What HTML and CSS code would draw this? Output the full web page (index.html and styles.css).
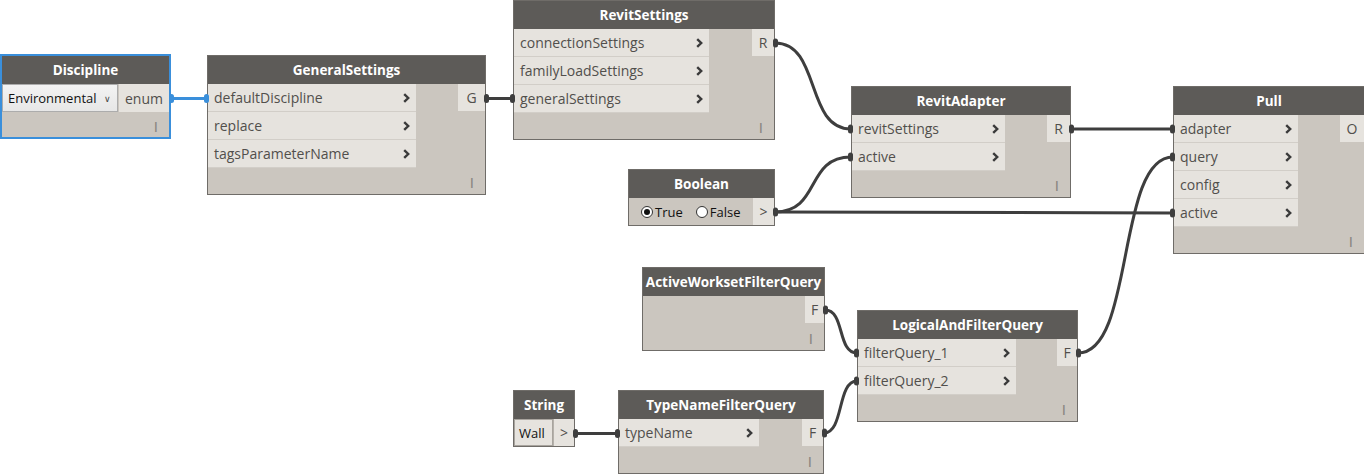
FILE: index.html
```html
<!DOCTYPE html>
<html>
<head>
<meta charset="utf-8">
<link rel="stylesheet" href="styles.css">
</head>
<body>
<div class="canvas">
  <svg class="wires" width="1364" height="474" viewBox="0 0 1364 474">
    <g fill="none" stroke="#3e3e3e" stroke-width="3">
      <path d="M486 98.5 L513 98.5"/>
      <path d="M775 43 C821 43 805 129 851 129"/>
      <path d="M775 212 C821 212 805 157 851 157"/>
      <path d="M775 212 L1173 213"/>
      <path d="M1071 129 L1173 129"/>
      <path d="M1078 353 C1135 353 1116 157 1173 157"/>
      <path d="M825 310 C845 310 837 353 857 353"/>
      <path d="M824 433 C844 433 837 381 857 381"/>
      <path d="M575 433.5 L618 433.5"/>
    </g>
    <path d="M171 98.5 L207 98.5" fill="none" stroke="#3a8fdb" stroke-width="3"/>
    <g fill="#3e3e3e">
      <rect x="484" y="94" width="5" height="9" rx="2.5"/>
      <rect x="510" y="94" width="5" height="9" rx="2.5"/>
      <rect x="773" y="38.5" width="5" height="9" rx="2.5"/>
      <rect x="848" y="124.5" width="5" height="9" rx="2.5"/>
      <rect x="773" y="207.5" width="5" height="9" rx="2.5"/>
      <rect x="848" y="152.5" width="5" height="9" rx="2.5"/>
      <rect x="1170" y="208.5" width="5" height="9" rx="2.5"/>
      <rect x="1069" y="124.5" width="5" height="9" rx="2.5"/>
      <rect x="1170" y="124.5" width="5" height="9" rx="2.5"/>
      <rect x="1170" y="152.5" width="5" height="9" rx="2.5"/>
      <rect x="1076" y="348.5" width="5" height="9" rx="2.5"/>
      <rect x="823" y="305.5" width="5" height="9" rx="2.5"/>
      <rect x="854" y="348.5" width="5" height="9" rx="2.5"/>
      <rect x="822" y="428.5" width="5" height="9" rx="2.5"/>
      <rect x="854" y="376.5" width="5" height="9" rx="2.5"/>
      <rect x="573" y="429" width="5" height="9" rx="2.5"/>
      <rect x="615" y="429" width="5" height="9" rx="2.5"/>
    </g>
    <g fill="#3a8fdb">
      <rect x="169" y="94" width="5" height="9" rx="2.5"/>
      <rect x="204" y="94" width="5" height="9" rx="2.5"/>
    </g>
  </svg>

  <!-- Discipline -->
  <div class="node n-discipline selected">
    <div class="hdr">Discipline</div>
    <div class="main">
      <div class="dropdown"><span>Environmental</span><span class="dd-arrow">&#x2228;</span></div>
      <div class="outs"><div class="out out-enum">enum</div></div>
    </div>
    <div class="foot">I</div>
  </div>

  <!-- GeneralSettings -->
  <div class="node n-general">
    <div class="hdr">GeneralSettings</div>
    <div class="main">
      <div class="ins">
        <div class="in"><span>defaultDiscipline</span><svg class="chev" width="7" height="10" viewBox="0 0 7 10"><path d="M1.2 1.2 L5.2 5 L1.2 8.8"/></svg></div>
        <div class="in"><span>replace</span><svg class="chev" width="7" height="10" viewBox="0 0 7 10"><path d="M1.2 1.2 L5.2 5 L1.2 8.8"/></svg></div>
        <div class="in"><span>tagsParameterName</span><svg class="chev" width="7" height="10" viewBox="0 0 7 10"><path d="M1.2 1.2 L5.2 5 L1.2 8.8"/></svg></div>
      </div>
      <div class="outs"><div class="out out-g">G</div></div>
    </div>
    <div class="foot">I</div>
  </div>

  <!-- RevitSettings -->
  <div class="node n-revitsettings">
    <div class="hdr">RevitSettings</div>
    <div class="main">
      <div class="ins">
        <div class="in"><span>connectionSettings</span><svg class="chev" width="7" height="10" viewBox="0 0 7 10"><path d="M1.2 1.2 L5.2 5 L1.2 8.8"/></svg></div>
        <div class="in"><span>familyLoadSettings</span><svg class="chev" width="7" height="10" viewBox="0 0 7 10"><path d="M1.2 1.2 L5.2 5 L1.2 8.8"/></svg></div>
        <div class="in"><span>generalSettings</span><svg class="chev" width="7" height="10" viewBox="0 0 7 10"><path d="M1.2 1.2 L5.2 5 L1.2 8.8"/></svg></div>
      </div>
      <div class="outs"><div class="out out-r">R</div></div>
    </div>
    <div class="foot">I</div>
  </div>

  <!-- RevitAdapter -->
  <div class="node n-adapter">
    <div class="hdr">RevitAdapter</div>
    <div class="main">
      <div class="ins">
        <div class="in"><span>revitSettings</span><svg class="chev" width="7" height="10" viewBox="0 0 7 10"><path d="M1.2 1.2 L5.2 5 L1.2 8.8"/></svg></div>
        <div class="in"><span>active</span><svg class="chev" width="7" height="10" viewBox="0 0 7 10"><path d="M1.2 1.2 L5.2 5 L1.2 8.8"/></svg></div>
      </div>
      <div class="outs"><div class="out out-r2">R</div></div>
    </div>
    <div class="foot">I</div>
  </div>

  <!-- Boolean -->
  <div class="node n-boolean">
    <div class="hdr">Boolean</div>
    <div class="main">
      <div class="radios">
        <span class="radio"><span class="dot on"></span>True</span>
        <span class="radio"><span class="dot"></span>False</span>
      </div>
      <div class="outs"><div class="out out-bool">&gt;</div></div>
    </div>
  </div>

  <!-- Pull -->
  <div class="node n-pull">
    <div class="hdr">Pull</div>
    <div class="main">
      <div class="ins">
        <div class="in"><span>adapter</span><svg class="chev" width="7" height="10" viewBox="0 0 7 10"><path d="M1.2 1.2 L5.2 5 L1.2 8.8"/></svg></div>
        <div class="in"><span>query</span><svg class="chev" width="7" height="10" viewBox="0 0 7 10"><path d="M1.2 1.2 L5.2 5 L1.2 8.8"/></svg></div>
        <div class="in"><span>config</span><svg class="chev" width="7" height="10" viewBox="0 0 7 10"><path d="M1.2 1.2 L5.2 5 L1.2 8.8"/></svg></div>
        <div class="in"><span>active</span><svg class="chev" width="7" height="10" viewBox="0 0 7 10"><path d="M1.2 1.2 L5.2 5 L1.2 8.8"/></svg></div>
      </div>
      <div class="outs"><div class="out out-o">O</div></div>
    </div>
    <div class="foot">I</div>
  </div>

  <!-- ActiveWorksetFilterQuery -->
  <div class="node n-workset">
    <div class="hdr">ActiveWorksetFilterQuery</div>
    <div class="main">
      <div class="ins"></div>
      <div class="outs"><div class="out out-f1">F</div></div>
    </div>
    <div class="foot">I</div>
  </div>

  <!-- LogicalAndFilterQuery -->
  <div class="node n-logical">
    <div class="hdr">LogicalAndFilterQuery</div>
    <div class="main">
      <div class="ins">
        <div class="in"><span>filterQuery_1</span><svg class="chev" width="7" height="10" viewBox="0 0 7 10"><path d="M1.2 1.2 L5.2 5 L1.2 8.8"/></svg></div>
        <div class="in"><span>filterQuery_2</span><svg class="chev" width="7" height="10" viewBox="0 0 7 10"><path d="M1.2 1.2 L5.2 5 L1.2 8.8"/></svg></div>
      </div>
      <div class="outs"><div class="out out-f2">F</div></div>
    </div>
    <div class="foot">I</div>
  </div>

  <!-- String -->
  <div class="node n-string">
    <div class="hdr">String</div>
    <div class="main">
      <div class="strval">Wall</div>
      <div class="outs"><div class="out out-str">&gt;</div></div>
    </div>
  </div>

  <!-- TypeNameFilterQuery -->
  <div class="node n-typename">
    <div class="hdr">TypeNameFilterQuery</div>
    <div class="main">
      <div class="ins">
        <div class="in"><span>typeName</span><svg class="chev" width="7" height="10" viewBox="0 0 7 10"><path d="M1.2 1.2 L5.2 5 L1.2 8.8"/></svg></div>
      </div>
      <div class="outs"><div class="out out-f3">F</div></div>
    </div>
    <div class="foot">I</div>
  </div>
</div>
</body>
</html>
```
FILE: styles.css
```css
html, body {
  margin: 0;
  padding: 0;
  background: #ffffff;
}
.canvas {
  position: relative;
  width: 1364px;
  height: 474px;
  overflow: hidden;
  background: #ffffff;
  font-family: "Open Sans", "Noto Sans", sans-serif;
}
.wires {
  position: absolute;
  left: 0;
  top: 0;
  z-index: 2;
}
.node {
  position: absolute;
  box-sizing: border-box;
  background: #cbc6bf;
  border: 1px solid #6f6c68;
  display: flex;
  flex-direction: column;
  z-index: 1;
}
.node.selected {
  border: 2px solid #3a8fdb;
}
.hdr {
  height: 28px;
  flex: none;
  background: #5d5b58;
  color: #ffffff;
  font-weight: 700;
  font-size: 13.5px;
  display: flex;
  align-items: center;
  justify-content: center;
  white-space: nowrap;
}
.main {
  display: flex;
  justify-content: space-between;
  align-items: flex-start;
}
.ins {
  display: flex;
  flex-direction: column;
}
.in {
  box-sizing: border-box;
  height: 28px;
  background: #e6e3de;
  border-bottom: 1px solid #d2cec8;
  display: flex;
  align-items: center;
  justify-content: space-between;
  padding: 0 6px 0 6px;
  color: #514f4c;
  font-size: 14px;
  white-space: nowrap;
}
.chev path {
  fill: none;
  stroke: #3a3a3a;
  stroke-width: 2.4;
}
.outs {
  display: flex;
  flex-direction: column;
}
.out {
  height: 27px;
  background: #e6e3de;
  color: #514f4c;
  font-size: 14px;
  display: flex;
  align-items: center;
  justify-content: center;
}
.foot {
  height: 26px;
  flex: none;
  display: flex;
  align-items: flex-end;
  justify-content: flex-end;
  padding: 0 11px 3px 0;
  box-sizing: border-box;
  color: #8a8782;
  font-family: "Liberation Sans", sans-serif;
  font-size: 15px;
  font-weight: 400;
  margin-top: auto;
}

/* positions on the free canvas */
.n-discipline { left: 0; top: 54px; width: 171px; height: 85px; }
.n-general { left: 207px; top: 55px; width: 279px; height: 140px; }
.n-general .ins { width: 208px; }
.n-revitsettings { left: 513px; top: 0; width: 262px; height: 140px; }
.n-revitsettings .ins { width: 195px; }
.n-adapter { left: 851px; top: 86px; width: 220px; height: 112px; }
.n-adapter .ins { width: 153px; }
.n-boolean { left: 628px; top: 169px; width: 147px; height: 57px; }
.n-pull { left: 1173px; top: 86px; width: 192px; height: 168px; }
.n-pull .ins { width: 124px; }
.n-workset { left: 642px; top: 267px; width: 183px; height: 84px; }
.n-logical { left: 857px; top: 310px; width: 221px; height: 112px; }
.n-logical .ins { width: 158px; }
.n-string { left: 513px; top: 390px; width: 62px; height: 57px; }
.n-typename { left: 618px; top: 390px; width: 206px; height: 84px; }
.n-typename .ins { width: 140px; }

.out-g { width: 27px; }
.out-r { width: 22px; }
.out-r2 { width: 23px; }
.out-o { width: 24px; }
.out-f1 { width: 19px; }
.out-f2 { width: 20px; }
.out-f3 { width: 21px; }
.out-enum { width: 50px; }
.out-bool, .out-str { width: 21px; height: 27px; }

.dropdown {
  box-sizing: border-box;
  width: 116px;
  height: 28px;
  border: 1px solid #acacac;
  background: linear-gradient(#f3f3f3, #e7e7e7);
  display: flex;
  align-items: center;
  justify-content: space-between;
  padding: 0 6px 0 5px;
  font-size: 13px;
  color: #111;
}
.dd-arrow {
  font-size: 9px;
  color: #444;
}
.out-enum {
  height: 28px;
}

.radios {
  display: flex;
  align-items: center;
  height: 27px;
  padding-left: 12px;
  gap: 13px;
  font-size: 13px;
  color: #111;
}
.radio {
  display: flex;
  align-items: center;
  gap: 2px;
}
.dot {
  box-sizing: border-box;
  width: 12px;
  height: 12px;
  border-radius: 50%;
  border: 1px solid #333;
  background: #fff;
  display: inline-flex;
  align-items: center;
  justify-content: center;
}
.dot.on::after {
  content: "";
  width: 6px;
  height: 6px;
  border-radius: 50%;
  background: #111;
}

.strval {
  box-sizing: border-box;
  width: 40px;
  height: 27px;
  background: #e6e3de;
  border: 1px solid #a8a49e;
  display: flex;
  align-items: center;
  padding-left: 4px;
  font-size: 13px;
  color: #111;
}
.out-str {
  box-sizing: border-box;
  border-left: 1px solid #b5b1ab;
}
```
